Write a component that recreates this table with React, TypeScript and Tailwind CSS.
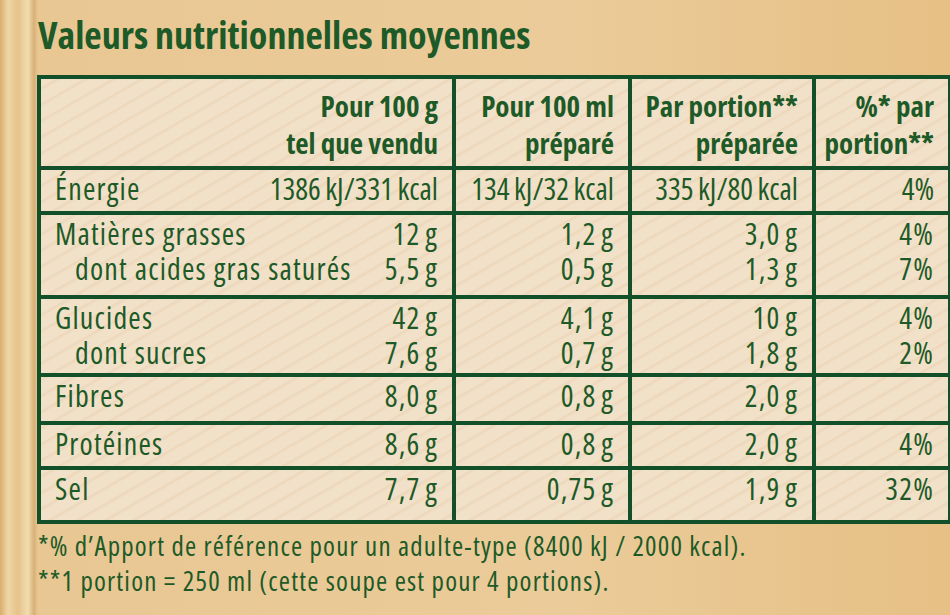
const cols = ["w-[415px]", "w-[176px]", "w-[184px]", "w-[136px]"];

type Line = { label: string; sub?: boolean; tight?: boolean; v: string[] };

const groups: { h: string; lines: Line[] }[] = [
  {
    h: "h-[45px]",
    lines: [{ label: "Énergie", tight: true, v: ["1386 kJ/331 kcal", "134 kJ/32 kcal", "335 kJ/80 kcal", "4%"] }],
  },
  {
    h: "h-[84px]",
    lines: [
      { label: "Matières grasses", v: ["12 g", "1,2 g", "3,0 g", "4%"] },
      { label: "dont acides gras saturés", sub: true, v: ["5,5 g", "0,5 g", "1,3 g", "7%"] },
    ],
  },
  {
    h: "h-[78px]",
    lines: [
      { label: "Glucides", v: ["42 g", "4,1 g", "10 g", "4%"] },
      { label: "dont sucres", sub: true, v: ["7,6 g", "0,7 g", "1,8 g", "2%"] },
    ],
  },
  { h: "h-[48px]", lines: [{ label: "Fibres", v: ["8,0 g", "0,8 g", "2,0 g", ""] }] },
  { h: "h-[45px]", lines: [{ label: "Protéines", v: ["8,6 g", "0,8 g", "2,0 g", "4%"] }] },
  { h: "h-[54px]", lines: [{ label: "Sel", v: ["7,7 g", "0,75 g", "1,9 g", "32%"] }] },
];

const headers = [
  ["Pour 100 g", "tel que vendu"],
  ["Pour 100 ml", "préparé"],
  ["Par portion**", "préparée"],
  ["%* par", "portion**"],
];

function Value({ text, tight }: { text: string; tight?: boolean }) {
  return <span className={tight ? "tracking-normal [word-spacing:-1px]" : "[word-spacing:-2px]"}>{text || "\u00a0"}</span>;
}

export default function App() {
  return (
    <div className="w-[950px] h-[615px] overflow-hidden text-[#1d5a27] font-['Open_Sans',sans-serif] font-stretch-condensed bg-[linear-gradient(90deg,#d9ad6e_0px,#f0d6a6_8px,#e6c38a_18px,#f2dcae_28px,#d8b077_34px,#e8c793_38px,#ebcb99_60%,#e6c085_100%)]">
      <div className="pl-[37px] pt-[11px]">
        <h1 className="pl-[1px] text-[38px] leading-[46px] font-bold">Valeurs nutritionnelles moyennes</h1>

        <table className="mt-[18px] w-[911px] table-fixed border-collapse border-[4px] border-[#12502a] bg-[#f1dfc5] bg-[repeating-linear-gradient(150deg,#f2e1c9_0px,#f2e1c9_9px,#ecd7ba_11px,#f2e1c9_14px)] text-[30px] tracking-[1.2px]">
          <thead>
            <tr className="h-[91px]">
              {headers.map((h, i) => (
                <th key={i} className={`${cols[i]} border-[4px] border-[#12502a] text-right align-top pt-[8px] pr-[14px] text-[29px] tracking-normal font-bold leading-[37px] whitespace-nowrap`}>
                  <div>{h[0]}</div>
                  <div>{h[1]}</div>
                </th>
              ))}
            </tr>
          </thead>
          <tbody>
            {groups.map((g, gi) => (
              <tr key={gi} className={g.h}>
                <td className="border-[4px] border-[#12502a] align-top pt-[1px] px-[14px] leading-[35px] whitespace-nowrap">
                  <div className="flex flex-col">
                    {g.lines.map((l, li) => (
                      <div key={li} className="flex justify-between">
                        <span className={l.sub ? "pl-[20px]" : ""}>{l.label}</span>
                        <Value text={l.v[0]} tight={l.tight} />
                      </div>
                    ))}
                  </div>
                </td>
                {[1, 2, 3].map((c) => (
                  <td key={c} className="border-[4px] border-[#12502a] align-top pt-[1px] pr-[14px] text-right leading-[35px] whitespace-nowrap">
                    {g.lines.map((l, li) => (
                      <div key={li}>
                        <Value text={l.v[c]} tight={l.tight} />
                      </div>
                    ))}
                  </td>
                ))}
              </tr>
            ))}
          </tbody>
        </table>

        <div className="mt-[4px] pl-[1px] text-[27px] leading-[35px] tracking-[1.2px]">
          <div>*% d’Apport de référence pour un adulte-type (8400 kJ / 2000 kcal).</div>
          <div>**1 portion = 250 ml (cette soupe est pour 4 portions).</div>
        </div>
      </div>
    </div>
  );
}
